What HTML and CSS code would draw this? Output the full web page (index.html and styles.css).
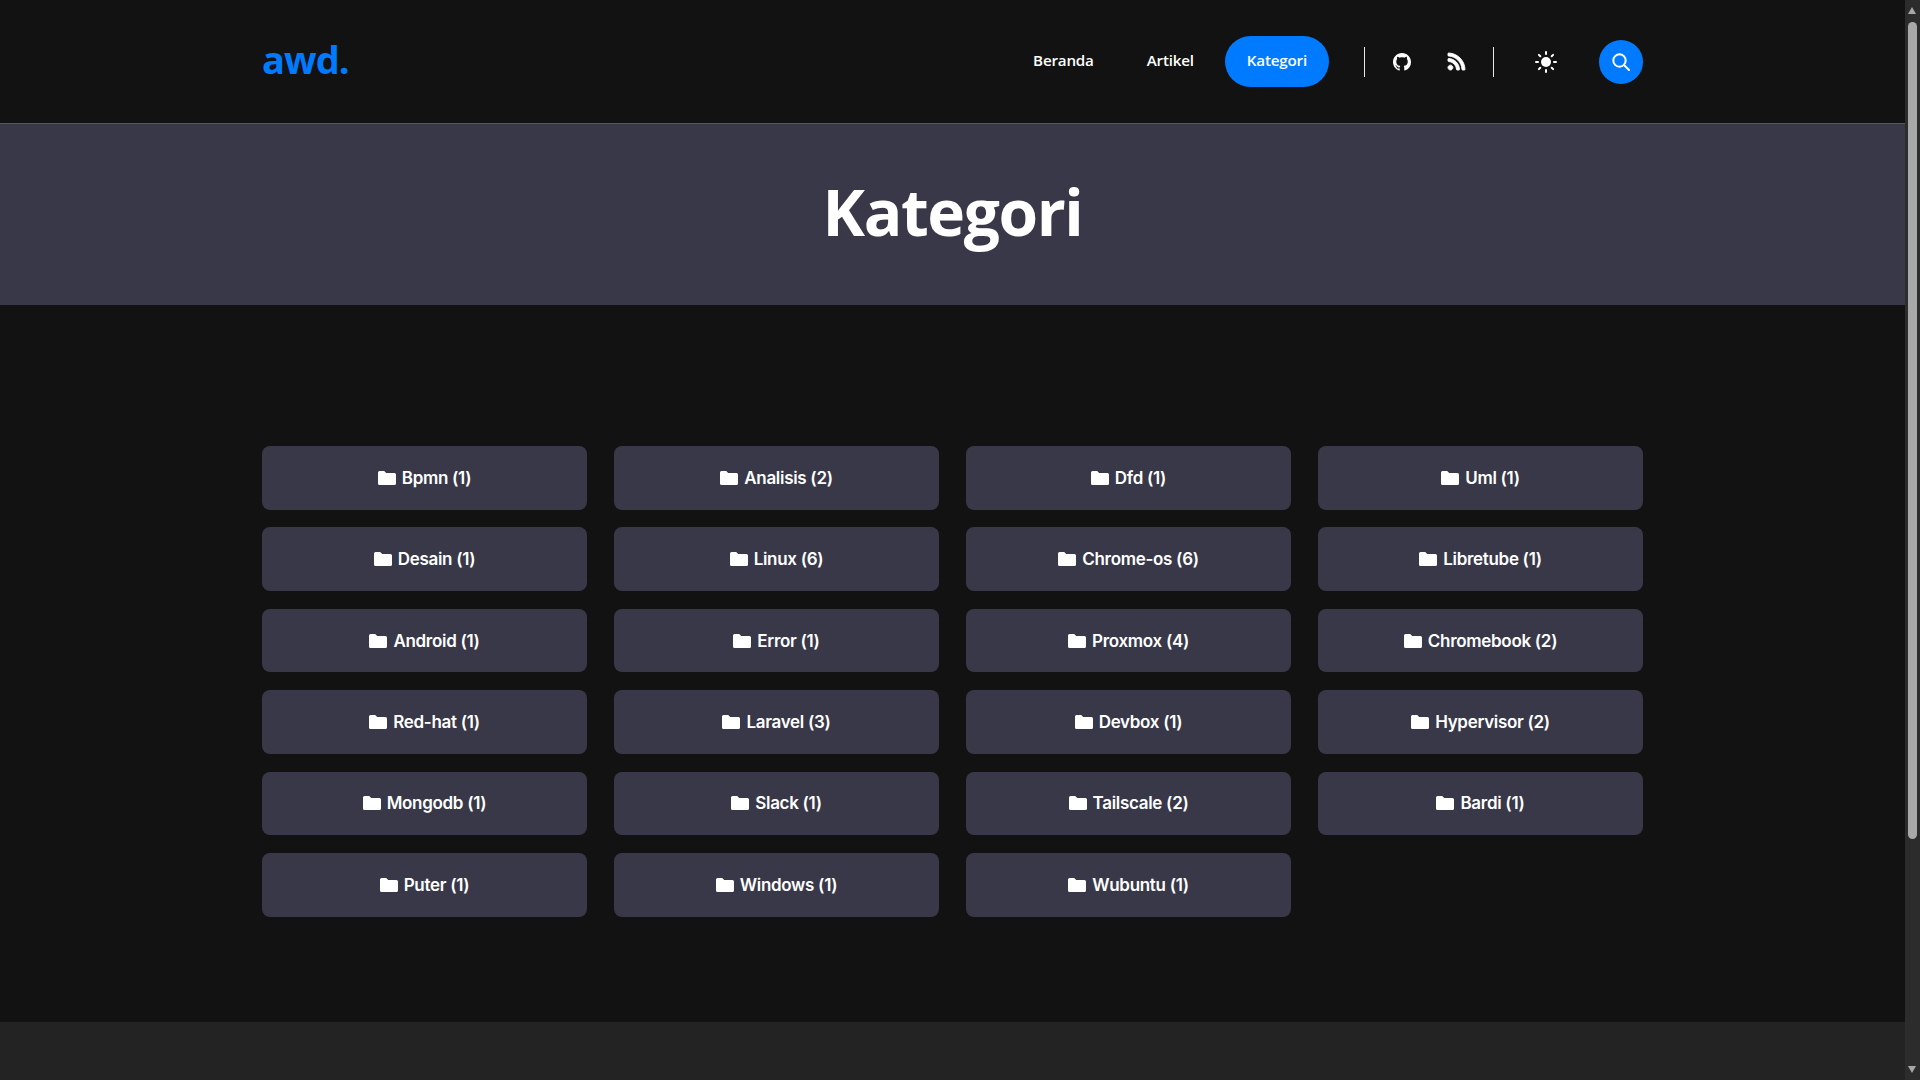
FILE: index.html
```html
<!DOCTYPE html>
<html lang="id">
<head>
<meta charset="utf-8">
<title>Kategori</title>
<link rel="stylesheet" href="styles.css">
</head>
<body>
<svg class="defs" aria-hidden="true"><symbol id="folder" viewBox="0 0 18 14"><path d="M1.6 0h4.6l2 2h8.2A1.6 1.6 0 0 1 18 3.6v8.8a1.6 1.6 0 0 1-1.6 1.6H1.6A1.6 1.6 0 0 1 0 12.400V1.600A1.600 1.600 0 0 1 1.600 0z"/></symbol></svg>
<div class="page">
  <div class="content">
    <header class="site-header">
      <a class="logo" href="#">awd.</a>
      <nav class="nav">
        <a class="nav-link" href="#">Beranda</a>
        <a class="nav-link" href="#">Artikel</a>
        <a class="nav-link active" href="#">Kategori</a>
      </nav>
      <div class="tools">
        <a class="tool" href="#" aria-label="GitHub">
          <svg class="icon-github" viewBox="0 0 16 16"><path fill="#fff" d="M8 0C3.58 0 0 3.58 0 8c0 3.54 2.29 6.53 5.47 7.59.4.07.55-.17.55-.38 0-.19-.01-.82-.01-1.49-2.01.37-2.53-.49-2.69-.94-.09-.23-.48-.94-.82-1.13-.28-.15-.68-.52-.01-.53.63-.01 1.08.58 1.23.82.72 1.21 1.87.87 2.33.66.07-.52.28-.87.51-1.07-1.78-.2-3.64-.89-3.64-3.95 0-.87.31-1.59.82-2.15-.08-.2-.36-1.02.08-2.12 0 0 .67-.21 2.2.82.64-.18 1.32-.27 2-.27.68 0 1.36.09 2 .27 1.53-1.04 2.2-.82 2.2-.82.44 1.1.16 1.92.08 2.12.51.56.82 1.27.82 2.15 0 3.07-1.87 3.75-3.65 3.95.29.25.54.73.54 1.48 0 1.07-.01 1.93-.01 2.2 0 .21.15.46.55.38A8.013 8.013 0 0016 8c0-4.42-3.58-8-8-8z"/></svg>
        </a>
        <a class="tool" href="#" aria-label="RSS">
          <svg class="icon-rss" viewBox="0 32 448 448"><path fill="#fff" stroke="#fff" stroke-width="24" d="M128.081 415.959c0 35.369-28.672 64.041-64.041 64.041S0 451.328 0 415.959s28.672-64.041 64.041-64.041 64.04 28.673 64.04 64.041zm175.66 47.25c-8.354-154.6-132.185-278.587-286.95-286.95C7.656 175.765 0 183.105 0 192.253v48.069c0 8.415 6.49 15.472 14.887 16.018 111.832 7.284 201.473 96.702 208.772 208.772.547 8.397 7.604 14.887 16.018 14.887h48.069c9.149.001 16.489-7.655 15.995-16.79zm144.249.288C439.596 229.677 251.465 40.445 16.503 32.01 7.473 31.686 0 38.981 0 48.016v48.068c0 8.625 6.835 15.645 15.453 15.999 191.179 7.839 344.627 161.316 352.465 352.465.353 8.618 7.373 15.453 15.999 15.453h48.068c9.034-.001 16.329-7.474 16.005-16.504z"/></svg>
        </a>
      </div>
      <button class="theme" aria-label="Tema">
        <svg class="icon-sun" viewBox="0 0 22 22"><circle cx="11" cy="11" r="5" fill="#fff"/><g stroke="#fff" stroke-width="2" stroke-linecap="round"><path d="M11 1v2M11 19v2M1 11h2M19 11h2M3.900 3.900l1.400 1.400M16.700 16.700l1.400 1.400M3.900 18.100l1.400-1.400M16.700 5.300l1.400-1.400"/></g></svg>
      </button>
      <button class="search" aria-label="Cari">
        <svg class="icon-search" viewBox="0 0 18 18"><circle cx="7.500" cy="7.500" r="6.200" fill="none" stroke="#fff" stroke-width="2"/><path d="M12 12l5 5" stroke="#fff" stroke-width="2" stroke-linecap="round"/></svg>
      </button>
    </header>

    <section class="hero"><h1>Kategori</h1></section>

    <main class="categories">
      <a class="cat" href="#"><svg class="folder"><use href="#folder"/></svg>Bpmn (1)</a>
      <a class="cat" href="#"><svg class="folder"><use href="#folder"/></svg>Analisis (2)</a>
      <a class="cat" href="#"><svg class="folder"><use href="#folder"/></svg>Dfd (1)</a>
      <a class="cat" href="#"><svg class="folder"><use href="#folder"/></svg>Uml (1)</a>
      <a class="cat" href="#"><svg class="folder"><use href="#folder"/></svg>Desain (1)</a>
      <a class="cat" href="#"><svg class="folder"><use href="#folder"/></svg>Linux (6)</a>
      <a class="cat" href="#"><svg class="folder"><use href="#folder"/></svg>Chrome-os (6)</a>
      <a class="cat" href="#"><svg class="folder"><use href="#folder"/></svg>Libretube (1)</a>
      <a class="cat" href="#"><svg class="folder"><use href="#folder"/></svg>Android (1)</a>
      <a class="cat" href="#"><svg class="folder"><use href="#folder"/></svg>Error (1)</a>
      <a class="cat" href="#"><svg class="folder"><use href="#folder"/></svg>Proxmox (4)</a>
      <a class="cat" href="#"><svg class="folder"><use href="#folder"/></svg>Chromebook (2)</a>
      <a class="cat" href="#"><svg class="folder"><use href="#folder"/></svg>Red-hat (1)</a>
      <a class="cat" href="#"><svg class="folder"><use href="#folder"/></svg>Laravel (3)</a>
      <a class="cat" href="#"><svg class="folder"><use href="#folder"/></svg>Devbox (1)</a>
      <a class="cat" href="#"><svg class="folder"><use href="#folder"/></svg>Hypervisor (2)</a>
      <a class="cat" href="#"><svg class="folder"><use href="#folder"/></svg>Mongodb (1)</a>
      <a class="cat" href="#"><svg class="folder"><use href="#folder"/></svg>Slack (1)</a>
      <a class="cat" href="#"><svg class="folder"><use href="#folder"/></svg>Tailscale (2)</a>
      <a class="cat" href="#"><svg class="folder"><use href="#folder"/></svg>Bardi (1)</a>
      <a class="cat" href="#"><svg class="folder"><use href="#folder"/></svg>Puter (1)</a>
      <a class="cat" href="#"><svg class="folder"><use href="#folder"/></svg>Windows (1)</a>
      <a class="cat" href="#"><svg class="folder"><use href="#folder"/></svg>Wubuntu (1)</a>
    </main>

    <footer class="site-footer"></footer>
  </div>

  <div class="scrollbar" aria-hidden="true">
    <span class="arrow up"></span>
    <span class="thumb"></span>
    <span class="arrow down"></span>
  </div>
</div>
</body>
</html>
```
FILE: styles.css
```css
* { box-sizing: border-box; }
html, body { margin: 0; height: 100%; overflow: hidden; }
body { background: #121212; color: #fff; font-family: "Open Sans", "Noto Sans", sans-serif; }
a { color: inherit; text-decoration: none; }
button { border: 0; padding: 0; background: none; display: flex; align-items: center; justify-content: center; }
svg { display: block; }
.defs { display: none; }

.page { display: flex; height: 1080px; overflow: hidden; }
.content { flex: 1; min-width: 0; display: flex; flex-direction: column; }

.site-header {
  height: 123px;
  flex: none;
  padding: 0 262px;
  display: flex;
  align-items: center;
  background: #121212;
}
.logo { font-size: 38px; font-weight: 700; color: #007bff; line-height: 1; margin-right: auto; letter-spacing: -0.9px; padding-bottom: 5px; }
.nav { display: flex; align-items: center; }
.nav-link { font-size: 15.2px; font-weight: 600; letter-spacing: -0.2px; line-height: 49px; height: 51px; padding: 0 22px; border-radius: 26px; margin-left: 9px; }
.nav-link.active { background: #007bff; }

.tools {
  display: flex;
  align-items: center;
  height: 30px;
  margin-left: 35px;
  padding: 0 28px;
  gap: 37px;
  border-left: 1px solid #e8e8e8;
  border-right: 1px solid #e8e8e8;
}
.icon-github { width: 18px; height: 18px; }
.icon-rss { width: 17px; height: 17px; overflow: visible; }
.theme { margin-left: 40px; width: 24px; height: 24px; }
.icon-sun { width: 22px; height: 22px; }
.search { width: 44px; height: 44px; margin-left: 41px; border-radius: 50%; background: #007bff; }
.icon-search { width: 18px; height: 18px; }

.hero {
  height: 182px;
  flex: none;
  border-top: 1px solid #55545f;
  background: #393848;
  display: flex;
  align-items: center;
  justify-content: center;
}
.hero h1 { margin: 0 0 4px; font-size: 64px; font-weight: 700; line-height: 1.2; letter-spacing: -1.4px; }

.categories {
  flex: none;
  height: 717px;
  padding: 141px 262px 0;
  display: grid;
  grid-template-columns: repeat(4, 1fr);
  grid-auto-rows: 63.6px;
  column-gap: 27px;
  row-gap: 17.8px;
}
.cat {
  display: flex;
  align-items: center;
  justify-content: center;
  gap: 6px;
  border-radius: 8px;
  background: #393848;
  font-family: Inter, sans-serif;
  font-size: 17px;
  font-weight: 600;
  letter-spacing: -0.3px;
}
.folder { width: 18px; height: 14px; fill: #fff; }

.site-footer { flex: 1; background: #232323; }

.scrollbar {
  position: relative;
  flex: none;
  width: 15px;
  height: 1080px;
  background: #2c2c2c;
}
.thumb { position: absolute; left: 3px; top: 22px; width: 9px; height: 817px; border-radius: 5px; background: #a8a8a8; }
.arrow { position: absolute; left: 3px; width: 0; height: 0; border-left: 4.5px solid transparent; border-right: 4.5px solid transparent; }
.arrow.up { top: 7px; border-bottom: 7px solid #a8a8a8; }
.arrow.down { bottom: 7px; border-top: 7px solid #a8a8a8; }
```
